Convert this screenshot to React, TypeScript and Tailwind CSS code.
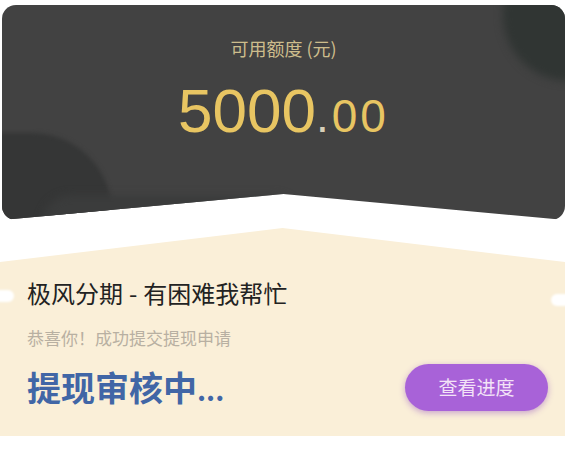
export default function App() {
  const cjk = '"Noto Sans CJK SC", "Noto Sans", sans-serif';

  return (
    <div className="w-[567px] h-[449px] bg-white overflow-hidden pt-[5px] px-[2px]" style={{ fontFamily: cjk }}>
      {/* balance card */}
      <div className="relative h-[215px] rounded-[14px] bg-[#424242] overflow-hidden [clip-path:polygon(0_0,100%_0,100%_100%,50%_calc(100%-26px),0_100%)]">
        <div className="absolute left-[-80px] top-[128px] w-[190px] h-[160px] rounded-full bg-[#353636] blur-[2px]" />
        <div className="absolute left-[40px] top-[190px] w-[260px] h-[60px] rounded-full bg-[#3b3c3c] blur-[4px]" />
        <div className="absolute right-[-70px] top-[-56px] w-[132px] h-[132px] rounded-full bg-[#303533] blur-[4px]" />

        <div className="relative flex flex-col items-center pt-[31px]">
          <div className="text-[18px] leading-[24px] text-[#cdbd8c]">可用额度 (元)</div>
          <div className="mt-[21px] flex items-baseline text-[#e8c562] leading-none" style={{ fontFamily: '"Liberation Sans", Arial, sans-serif' }}>
            <span className="text-[62px] leading-[60px]">5000</span>
            <span className="text-[46px] leading-[60px] tracking-[3px]">
              <span className="text-[#d8cfb8]">.</span>00
            </span>
          </div>
        </div>
      </div>

      {/* status card */}
      <div className="relative mt-[8px] h-[208px] -ml-[2px] bg-[#faefd8] [clip-path:polygon(0_34px,50%_0,100%_34px,100%_100%,0_100%)]">
        <div className="absolute left-[-6px] top-[62px] w-[20px] h-[12px] rounded-full bg-white blur-[1px]" />
        <div className="absolute right-[-6px] top-[66px] w-[20px] h-[12px] rounded-full bg-white blur-[1px]" />

        <div className="flex flex-col pt-[49px] pl-[27px] pr-[17px]">
          <div className="text-[24px] leading-[32px] text-[#222222]">
            极风分期<span className="px-[6px]">-</span>有困难我帮忙
          </div>
          <div className="mt-[17px] text-[17px] leading-[24px] text-[#b8b0a2]">恭喜你！成功提交提现申请</div>
          <div className="mt-[14px] flex items-center justify-between">
            <div className="text-[34px] leading-[40px] font-bold text-[#4166a6]">
              提现审核中<span className="text-[28px]">...</span>
            </div>
            <button className="w-[143px] h-[47px] rounded-full bg-[#a862d8] text-[19px] text-[#f3e3f7] shadow-[0_2px_6px_rgba(140,70,190,0.45)]">
              查看进度
            </button>
          </div>
        </div>
      </div>
    </div>
  );
}
